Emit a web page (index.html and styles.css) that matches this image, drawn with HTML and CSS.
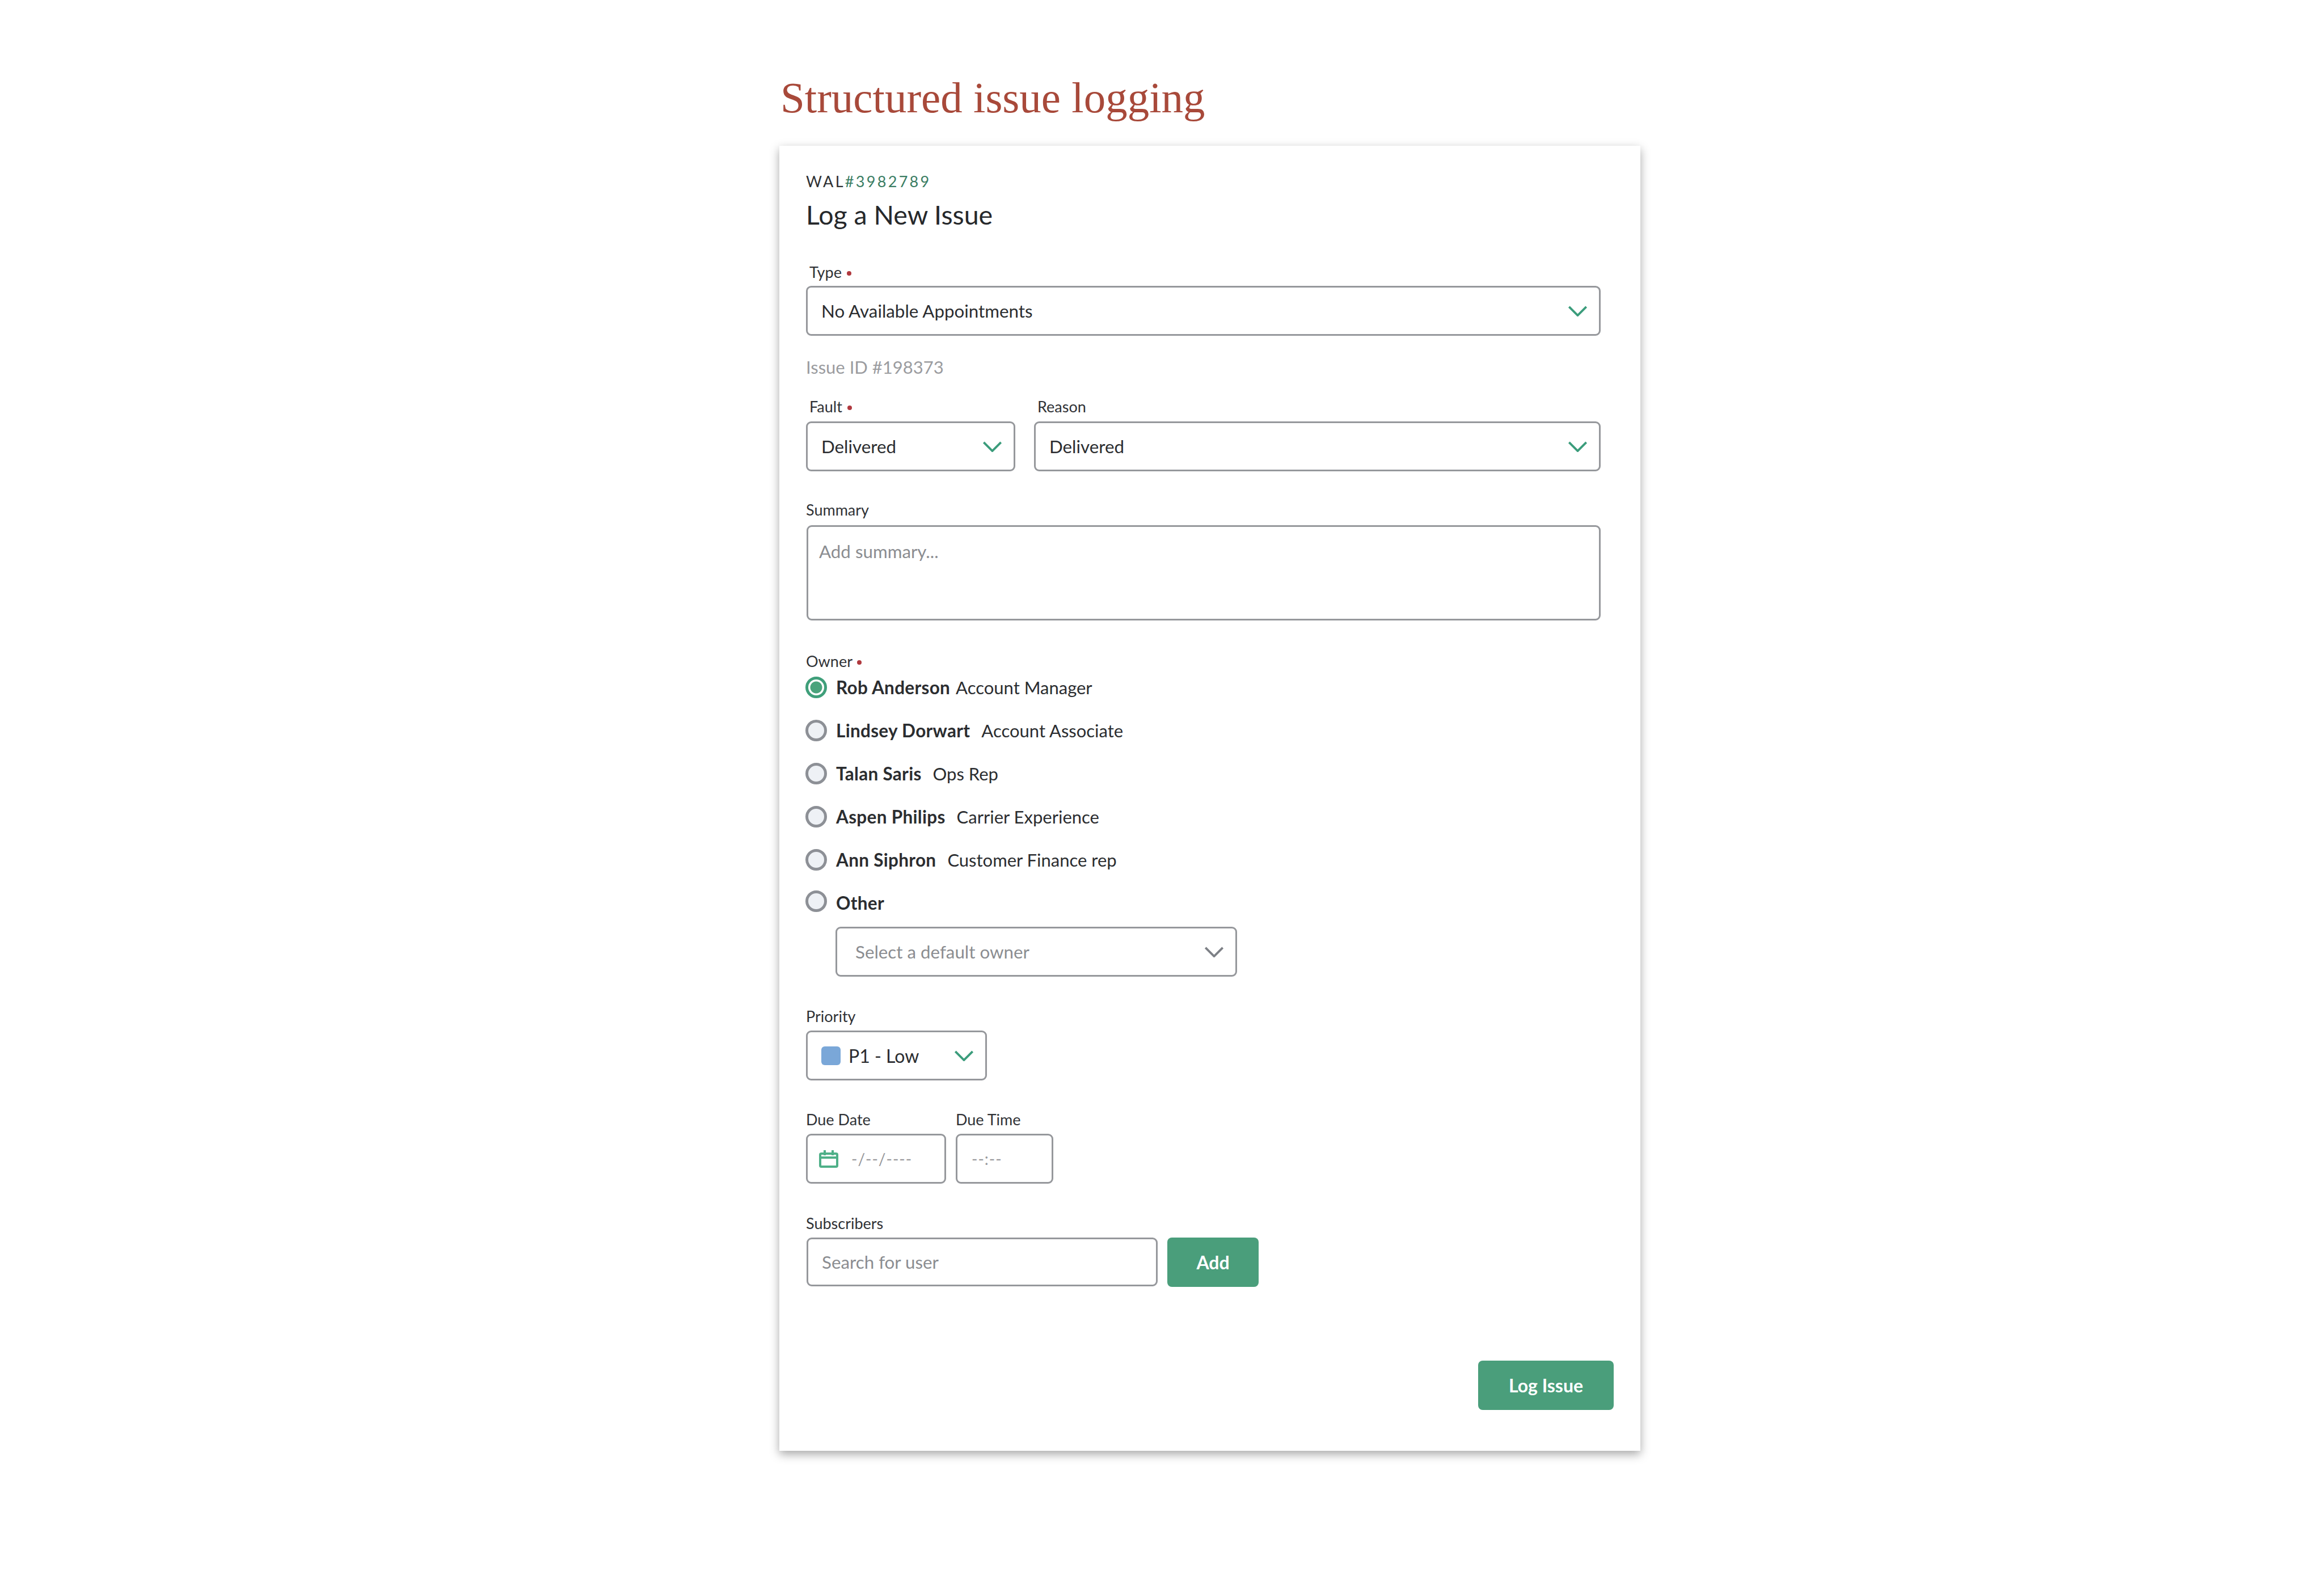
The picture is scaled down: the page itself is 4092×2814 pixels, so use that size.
FILE: index.html
```html
<!DOCTYPE html>
<html lang="en">
<head>
    <meta charset="utf-8">
    <title>Structured issue logging</title>
    <link rel="stylesheet" href="styles.css">
</head>
<body>
<svg width="0" height="0" class="defs">
    <symbol id="chev" viewBox="0 0 36 20"><path d="M2 2 L18 18 L34 2" fill="none" stroke="currentColor" stroke-width="4"/></symbol>
</svg>
<div class="page">
    <h1 class="pageTitle">Structured issue logging</h1>
    <div class="card">
        <div class="ref">WAL<span class="refNum">#3982789</span></div>
        <h2 class="formTitle">Log a New Issue</h2>

        <div class="label labelIn typeLabel">Type <span class="req"></span></div>
        <div class="box select"><span>No Available Appointments</span><svg class="chev"><use href="#chev"/></svg></div>

        <div class="issueId">Issue ID #198373</div>

        <div class="rowFields faultRow">
            <div class="faultCol">
                <div class="label labelIn">Fault <span class="req"></span></div>
                <div class="box select"><span>Delivered</span><svg class="chev"><use href="#chev"/></svg></div>
            </div>
            <div class="reasonCol">
                <div class="label labelIn">Reason</div>
                <div class="box select"><span>Delivered</span><svg class="chev"><use href="#chev"/></svg></div>
            </div>
        </div>

        <div class="label summaryLabel">Summary</div>
        <div class="box textarea">Add summary...</div>

        <div class="label ownerLabel">Owner <span class="req"></span></div>
        <div class="radios">
            <div class="radioRow"><span class="radio on"></span><b class="name nameTight">Rob Anderson</b><span class="role">Account Manager</span></div>
            <div class="radioRow"><span class="radio"></span><b class="name">Lindsey Dorwart</b><span class="role">Account Associate</span></div>
            <div class="radioRow"><span class="radio"></span><b class="name">Talan Saris</b><span class="role">Ops Rep</span></div>
            <div class="radioRow"><span class="radio"></span><b class="name">Aspen Philips</b><span class="role">Carrier Experience</span></div>
            <div class="radioRow"><span class="radio"></span><b class="name">Ann Siphron</b><span class="role">Customer Finance rep</span></div>
            <div class="radioRow radioOther"><span class="radio"></span><b class="name otherName">Other</b></div>
        </div>
        <div class="box select ownerSelect"><span class="ph">Select a default owner</span><svg class="chev chevGray"><use href="#chev"/></svg></div>

        <div class="label priorityLabel">Priority</div>
        <div class="box select prioritySelect"><span class="swatch"></span><span class="priorityText">P1 - Low</span><svg class="chev"><use href="#chev"/></svg></div>

        <div class="rowFields dueRow">
            <div>
                <div class="label">Due Date</div>
                <div class="box dateBox">
                    <svg class="cal" viewBox="0 0 34 32"><path d="M2 9 a2 2 0 0 1 2-2 h26 a2 2 0 0 1 2 2 v19 a2 2 0 0 1-2 2 h-26 a2 2 0 0 1-2-2 z M2 14 h30 M10 1 v9 M24 1 v9" fill="none" stroke="#4fb088" stroke-width="4"/></svg>
                    <span class="dashes">-/--/----</span>
                </div>
            </div>
            <div>
                <div class="label">Due Time</div>
                <div class="box timeBox"><span class="dashes">--:--</span></div>
            </div>
        </div>

        <div class="label subsLabel">Subscribers</div>
        <div class="rowFields subsRow">
            <div class="box searchBox"><span class="ph">Search for user</span></div>
            <a href="#none" class="btn addBtn">Add</a>
        </div>

        <div class="formEnd"><a href="#none" class="btn logBtn">Log Issue</a></div>
    </div>
</div>
</body>
</html>
```

FILE: styles.css
```css
*{padding: 0;margin: 0;box-sizing: border-box;}
html,body {background-color: #fff;}
body {font-family: "Lato", "Noto Sans", sans-serif;color: #2b2d30;}
.defs {position: absolute;}

.page {width: 1518px;min-height: 2814px;margin-left: 1374px;padding-top: 122px;}
.pageTitle {font-family: "Liberation Serif", serif;font-weight: 400;font-size: 77px;line-height: 100px;height: 135px;color: #a8493a;margin-left: 2px;}

.card {background-color: #fff;box-shadow: 0 6px 16px rgba(0,0,0,.35);padding: 48px 47px 72px;height: 2301px;}
.ref {font-size: 27px;line-height: 30px;letter-spacing: 3.3px;color: #2f3133;}
.refNum {color: #3a7d63;}
.formTitle {font-weight: 400;font-size: 46.5px;line-height: 60px;margin-top: 13px;color: #26282b;}

.label {font-size: 27px;line-height: 30px;color: #303236;}
.labelIn {padding-left: 6px;}
.req {display: inline-block;width: 8px;height: 8px;border-radius: 50%;background-color: #b0393f;margin-left: 2px;vertical-align: 4px;}
.typeLabel {margin-top: 57px;}
.summaryLabel {margin-top: 53px;}
.ownerLabel {margin-top: 57px;}
.priorityLabel {margin-top: 55px;}
.subsLabel {margin-top: 55px;}

.box {border: 3px solid #96989c;border-radius: 9px;background-color: #fff;font-size: 31.3px;height: 88px;}
.select {display: flex;align-items: center;padding: 0 20px 0 24px;justify-content: space-between;width: 1401px;margin-top: 9px;}
.chev {width: 35px;height: 19px;color: #3a9c7b;flex: none;}
.chevGray {color: #7d8086;}
.ph {color: #8b8d91;}

.issueId {font-size: 31px;line-height: 36px;color: #9b9c9f;margin-top: 37px;}

.rowFields {display: flex;}
.faultRow {margin-top: 37px;gap: 33px;}
.faultRow .select {margin-top: 11px;}
.faultCol .select {width: 369px;}
.reasonCol .select {width: 999px;}

.textarea {height: 168px;width: 1400px;margin: 12px 0 0 1px;padding: 25px 19px;color: #8b8d91;line-height: 36px;}

.radios {margin-top: 9px;display: flex;flex-direction: column;gap: 32px;}
.radioRow {display: flex;align-items: center;height: 44px;font-size: 31px;margin-left: -1px;}
.radioOther {margin-top: -3px;}
.radio {width: 38px;height: 38px;border: 5px solid #8d9096;border-radius: 50%;background-color: #eef1f5;margin-right: 16px;flex: none;}
.radio.on {border-color: #3f9f7a;background: radial-gradient(circle, #4aa37c 0 10px, #fff 11px);}
.name {font-weight: 700;font-size: 31.5px;letter-spacing: .3px;margin-right: 20px;}
.nameTight {margin-right: 10px;}
.otherName {position: relative;top: 3px;}

.ownerSelect {width: 708px;margin: 23px 0 0 52px;padding: 0 20px 0 32px;}
.prioritySelect {width: 319px;margin-top: 10px;justify-content: flex-start;padding-right: 20px;}
.swatch {width: 34px;height: 33px;border-radius: 6px;background-color: #7aa7d8;flex: none;}
.priorityText {margin-left: 14px;flex: 1;font-size: 32px;}

.dueRow {margin-top: 54px;gap: 17px;}
.dateBox,.timeBox {display: flex;align-items: center;margin-top: 10px;}
.dateBox {width: 247px;padding-left: 20px;}
.timeBox {width: 172px;padding-left: 25px;}
.cal {width: 34px;height: 32px;margin-right: 23px;}
.dashes {font-size: 28px;letter-spacing: 1px;color: #97989b;}

.subsRow {margin-top: 10px;gap: 17px;}
.searchBox {width: 619px;height: 86px;margin-left: 1px;display: flex;align-items: center;padding-left: 24px;}
.btn {display: flex;align-items: center;justify-content: center;background-color: #4a9e7b;color: #fff;border-radius: 8px;font-size: 32px;font-weight: 700;text-decoration: none;}
.addBtn {width: 161px;height: 87px;}
.formEnd {display: flex;justify-content: flex-end;margin-top: 130px;}
.logBtn {width: 239px;height: 87px;}
```
